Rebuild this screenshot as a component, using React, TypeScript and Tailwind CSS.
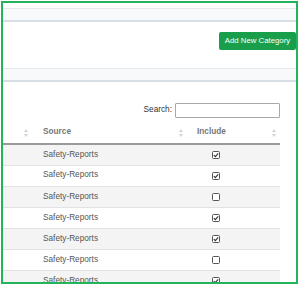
import React from "react";

const SortIcon = () => (
  <svg width="4" height="8" viewBox="0 0 4 8" className="block">
    <path d="M2 0 L4 3 L0 3 Z" fill="#d4d4d4" />
    <path d="M2 8 L4 5 L0 5 Z" fill="#d4d4d4" />
  </svg>
);

const Box = ({ checked }: { checked: boolean }) => (
  <svg width="8" height="8" viewBox="0 0 8 8" className="block">
    <rect x="0.5" y="0.5" width="7" height="7" rx="1" fill="#fff" stroke="#555" strokeWidth="1" />
    {checked && <path d="M1.8 4.2 L3.3 5.6 L6.2 2.3" fill="none" stroke="#333" strokeWidth="1.1" />}
  </svg>
);

const rows = [true, true, false, true, true, false, true];

export default function App() {
  return (
    <div
      className="w-[300px] h-[285px] bg-white pt-[1px] pl-[1px] overflow-hidden"
      style={{ fontFamily: '"Liberation Sans", Arial, sans-serif' }}
    >
      <div className="w-[297px] h-[283px] border-2 border-[#22b35b] flex flex-col overflow-hidden">
        <div className="h-[5px] shrink-0" />
        <div className="h-[14px] shrink-0 bg-[#f8f9fa] border-t border-[#e6e9ec] border-b-2 border-b-[#d7dee5]" />
        <div className="h-[46px] shrink-0 flex justify-end items-start pt-[10px]">
          <div className="h-[18px] w-[77px] bg-[#199f4c] rounded-[2px] text-white text-[7.8px] flex items-center justify-center">
            Add New Category
          </div>
        </div>
        <div className="h-[14px] shrink-0 bg-[#f8f9fa] border-t border-[#e6e9ec] border-b-2 border-b-[#d7dee5]" />
        <div className="h-[21px] shrink-0" />
        <div className="h-[15px] shrink-0 flex justify-end items-center pr-[16px] gap-[3px]">
          <span className="text-[8.25px] text-[#333]">Search:</span>
          <div className="w-[105px] h-[15px] border border-[#a9a9a9] rounded-[1px] bg-white" />
        </div>
        <div className="h-[4px] shrink-0" />
        <table className="w-[277px] border-collapse table-fixed text-[8.25px]">
          <colgroup>
            <col className="w-[28px]" />
            <col className="w-[156px]" />
            <col className="w-[93px]" />
          </colgroup>
          <thead>
            <tr className="h-[22px] border-b-2 border-[#9a9a9a]">
              <th className="p-0 relative">
                <div className="flex justify-end pr-[3px]"><SortIcon /></div>
              </th>
              <th className="p-0 font-bold text-[#777] text-left">
                <div className="flex items-center justify-between pl-[12px] pr-[4px]">
                  <span>Source</span>
                  <SortIcon />
                </div>
              </th>
              <th className="p-0 font-bold text-[#777] text-left">
                <div className="flex items-center justify-between pl-[10px] pr-[4px]">
                  <span>Include</span>
                  <SortIcon />
                </div>
              </th>
            </tr>
          </thead>
          <tbody>
            {rows.map((c, i) => (
              <tr
                key={i}
                className={`h-[21.1px] ${i > 0 ? "border-t border-[#e2e2e2]" : ""} ${i % 2 === 0 ? "bg-[#f4f4f4]" : "bg-white"}`}
              >
                <td className="p-0" />
                <td className="p-0 pl-[12px] text-[#555]">Safety-Reports</td>
                <td className="p-0 pl-[25px]">
                  <Box checked={c} />
                </td>
              </tr>
            ))}
          </tbody>
        </table>
      </div>
    </div>
  );
}
